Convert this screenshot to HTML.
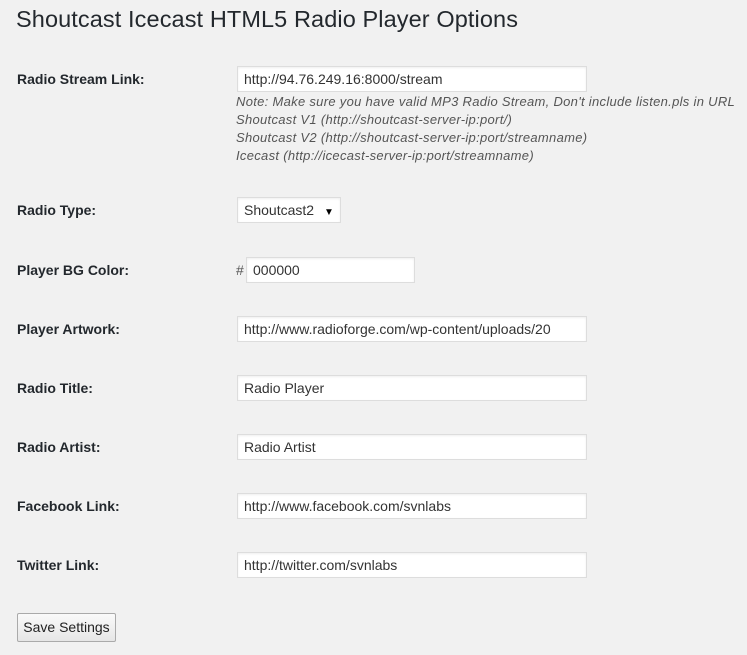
<!DOCTYPE html>
<html><head><style>
body{margin:0;background:#f1f1f1;width:747px;height:655px;position:relative;font-family:"Liberation Sans",sans-serif;color:#222;overflow:hidden}
.a{position:absolute}
h1{position:absolute;left:16px;top:6px;margin:0;font-weight:400;font-size:23.5px;color:#23282d;letter-spacing:0.1px}
.l{position:absolute;left:17px;font-size:14px;font-weight:600;color:#23282d}
.i{position:absolute;left:237px;width:348px;height:24px;background:#fff;border:1px solid #ddd;box-shadow:inset 0 1px 2px rgba(0,0,0,.07);font-size:14px;line-height:24px;padding-left:6px;box-sizing:content-box;white-space:nowrap;overflow:hidden;color:#333}
.n{position:absolute;left:236px;font-size:13px;font-style:italic;color:#555;line-height:18px;letter-spacing:0.3px;white-space:nowrap}
</style></head><body>
<h1>Shoutcast Icecast HTML5 Radio Player Options</h1>
<div class="l" style="top:71px">Radio Stream Link:</div>
<div class="i" style="top:66px;width:342px">http://94.76.249.16:8000/stream</div>
<div class="n" style="top:93px">Note: Make sure you have valid MP3 Radio Stream, Don't include listen.pls in URL<br>Shoutcast V1 (http://shoutcast-server-ip:port/)<br>Shoutcast V2 (http://shoutcast-server-ip:port/streamname)<br>Icecast (http://icecast-server-ip:port/streamname)</div>
<div class="l" style="top:202px">Radio Type:</div>
<div class="i" style="top:197px;width:96px">Shoutcast2 <span style="font-size:10px;margin-left:6px;color:#000">▼</span></div>
<div class="l" style="top:262px">Player BG Color:</div>
<div class="a" style="left:236px;top:262px;font-size:14px;color:#555">#</div>
<div class="i" style="top:257px;left:246px;width:161px">000000</div>
<div class="l" style="top:321px">Player Artwork:</div>
<div class="i" style="top:316px;width:342px">http://www.radioforge.com/wp-content/uploads/20</div>
<div class="l" style="top:380px">Radio Title:</div>
<div class="i" style="top:375px;width:342px">Radio Player</div>
<div class="l" style="top:439px">Radio Artist:</div>
<div class="i" style="top:434px;width:342px">Radio Artist</div>
<div class="l" style="top:498px">Facebook Link:</div>
<div class="i" style="top:493px;width:342px">http://www.facebook.com/svnlabs</div>
<div class="l" style="top:557px">Twitter Link:</div>
<div class="i" style="top:552px;width:342px">http://twitter.com/svnlabs</div>
<div class="a" style="left:17px;top:613px;width:97px;height:27px;border:1px solid #aaa;border-radius:2px;background:linear-gradient(#fafafa,#e6e6e6);font-size:14px;line-height:27px;text-align:center;color:#222">Save Settings</div>
</body></html>
